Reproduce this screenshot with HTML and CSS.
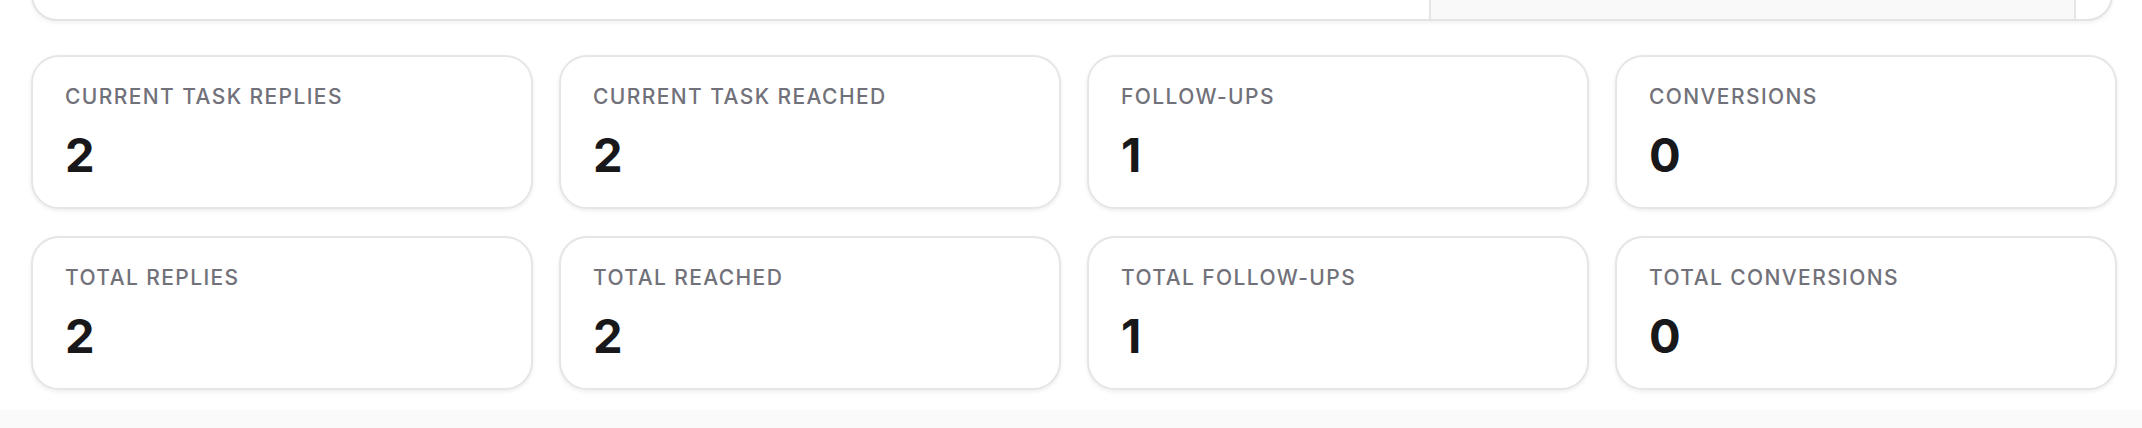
FILE: index.html
```html
<!DOCTYPE html>
<html lang="en">
<head>
<meta charset="utf-8">
<title>Stats</title>
<link rel="stylesheet" href="styles.css">
</head>
<body>
<div class="page">
  <div class="panel">
    <div class="panel-main"></div>
    <div class="panel-side"></div>
    <div class="panel-end"></div>
  </div>
  <div class="stats">
    <div class="card"><div class="label">Current Task Replies</div><div class="value">2</div></div>
    <div class="card"><div class="label">Current Task Reached</div><div class="value">2</div></div>
    <div class="card"><div class="label">Follow-ups</div><div class="value">1</div></div>
    <div class="card"><div class="label">Conversions</div><div class="value">0</div></div>
    <div class="card"><div class="label">Total Replies</div><div class="value">2</div></div>
    <div class="card"><div class="label">Total Reached</div><div class="value">2</div></div>
    <div class="card"><div class="label">Total Follow-ups</div><div class="value">1</div></div>
    <div class="card"><div class="label">Total Conversions</div><div class="value">0</div></div>
  </div>
</div>
</body>
</html>
```
FILE: styles.css
```css
* { box-sizing: border-box; }
html, body { margin: 0; padding: 0; }
body {
  background: #fafafa;
  font-family: Inter, "Noto Sans", "Liberation Sans", sans-serif;
  overflow: hidden;
}
.page {
  background: #ffffff;
  padding: 0 25px 20px 31px;
}
.panel {
  display: flex;
  height: 44px;
  margin-top: -23px;
  margin-right: 4px;
  background: #ffffff;
  border: 2px solid #e4e4e7;
  border-radius: 0 0 26px 26px;
  box-shadow: 0 2px 4px rgba(0, 0, 0, 0.06);
  overflow: hidden;
}
.panel-main { flex: 1; }
.panel-side {
  width: 647px;
  background: #f9f9f9;
  border-left: 2px solid #e5e5e5;
  border-right: 2px solid #e5e5e5;
}
.panel-end { width: 35px; }
.stats {
  margin-top: 34px;
  display: grid;
  grid-template-columns: repeat(4, 1fr);
  column-gap: 26px;
  row-gap: 27px;
}
.card {
  background: #ffffff;
  border: 2px solid #e6e6e9;
  border-radius: 28px;
  box-shadow: 0 2px 4px rgba(0, 0, 0, 0.07);
  padding: 26px 32px 28px;
}
.label {
  font-size: 21px;
  line-height: 28px;
  font-weight: 500;
  letter-spacing: 1.4px;
  text-transform: uppercase;
  color: #71717a;
  margin-bottom: 20px;
}
.value {
  font-size: 47px;
  line-height: 48px;
  font-weight: 700;
  color: #18181b;
}
```
